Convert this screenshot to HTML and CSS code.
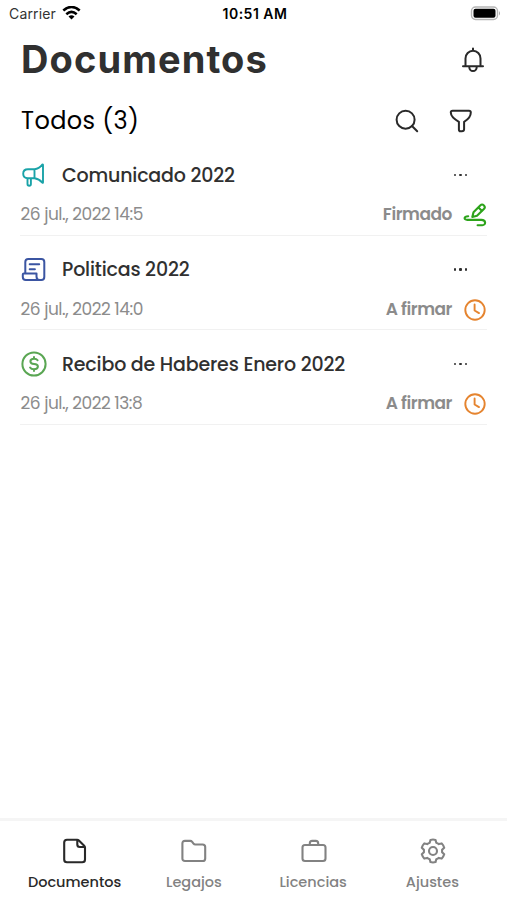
FILE: index.html
```html
<!DOCTYPE html>
<html lang="es">
<head>
<meta charset="utf-8">
<title>Documentos</title>
<link rel="stylesheet" href="styles.css">
</head>
<body>
<div class="app">
  <div class="status">
    <div class="carrier"><span>Carrier</span>
      <svg width="19" height="14" viewBox="0 0 18 14" fill="none" stroke="#000" stroke-width="2.6"><path d="M.8 4.500Q9-2.500 17.200 4.500M3.800 8.200q5.200-4.500 10.400 0"/><path d="M9 13.400l-3-3q3-2.400 6 0z" fill="#000" stroke="none"/></svg>
    </div>
    <span class="clock">10:51 AM</span>
    <svg class="battery" width="31" height="15" viewBox="0 0 31 15"><rect x="1.500" y="1" width="26" height="12.500" rx="4" fill="#fff" stroke="#b5b5b5" stroke-width="1.4"/><rect x="3.500" y="2.800" width="22" height="9" rx="2" fill="#000"/><path d="M29 5q2 2.300 0 4.600z" fill="#aaa"/></svg>
  </div>

  <header class="header">
    <h1>Documentos</h1>
    <svg width="24" height="26" viewBox="0 0 24 26" fill="none" stroke="#292929" stroke-width="2" stroke-linecap="round" stroke-linejoin="round"><path d="M12 1.500v2M2 19.200h20M4.500 19v-7.500a7.500 7.700 0 0 1 15 0V19M8.200 19.500a3.800 4.600 0 0 0 7.600 0"/></svg>
  </header>

  <section class="toolbar">
    <h2>Todos (3)</h2>
    <div class="tools">
      <svg width="24" height="24" viewBox="0 0 24 24" fill="none" stroke="#292929" stroke-width="2" stroke-linecap="round"><circle cx="10.600" cy="10.700" r="9"/><path d="M17 17l5.200 5.200"/></svg>
      <svg width="24" height="24" viewBox="0 0 24 24" fill="none" stroke="#292929" stroke-width="2" stroke-linejoin="round"><path d="M3.600 1.800h16.400q1.800 0 1.800 1.800c0 4-2 6.600-6.700 9.200v7.400c0 1.300-1.300 2-2.300 2h-1.400c-1 0-1.500-.7-1.500-1.800v-7.600C4.100 9.600 1.800 7.400 1.800 3.600q0-1.800 1.800-1.800z"/></svg>
    </div>
  </section>

  <main class="list">
    <article class="item">
      <div class="top">
        <svg class="kind" viewBox="0 0 26 26" fill="none" stroke="#1aa3a8" stroke-width="1.9" stroke-linejoin="round"><path d="M13.500 7.200H7q-4.800 0-4.800 4.500T7 16.200h6.500zM13.500 7.200q4.500-.5 7.800-4.600.7-.5.700.5v17.200q0 1-.7.300Q18 16.700 13.500 16.200M6.500 16.200v5.800q0 1.700 1.700 1.700t1.700-1.700v-5.800"/></svg>
        <span class="name">Comunicado 2022</span><span class="more"><i></i><i></i><i></i></span>
      </div>
      <div class="bottom">
        <span class="date">26 jul., 2022 14:5</span><span class="state">Firmado</span>
        <svg class="mark" viewBox="0 0 24 24" fill="none" stroke="#2ca31a" stroke-width="2.100" stroke-linecap="round" stroke-linejoin="round"><path d="M9.300 13.900l1.200-4.600 6.700-6.900q1.900-1.800 3.700 0t0 3.700l-6.900 6.700zM15.500 4.400l3.500 3.500M5.200 13.200c-4.400 0-4.800 3.600-.9 3.700h14c5 0 4.800 5.300 1 5.300h-4.700"/></svg>
      </div>
    </article>
    <article class="item">
      <div class="top">
        <svg class="kind" viewBox="0 0 26 26" fill="none" stroke="#3b55a2" stroke-width="2" stroke-linecap="round" stroke-linejoin="round"><path d="M4.300 16.500V5q0-3 3-3h13q3 0 3 3v15q0 3-3 3H4.800q-3 0-3-3v-2.500q0-1 1-1h12.700v3q0 3.500 3.200 3.500M8.700 7.200h9.500M8.700 12.200h5.200"/></svg>
        <span class="name">Politicas 2022</span><span class="more"><i></i><i></i><i></i></span>
      </div>
      <div class="bottom">
        <span class="date">26 jul., 2022 14:0</span><span class="state pending">A firmar</span>
        <svg class="mark" viewBox="0 0 24 24" fill="none" stroke="#e5842f" stroke-width="1.900" stroke-linecap="round" stroke-linejoin="round"><circle cx="12" cy="12" r="9.700"/><path d="M11.600 6.500v6l4.400 2.600"/></svg>
      </div>
    </article>
    <article class="item">
      <div class="top">
        <svg class="kind" viewBox="0 0 26 26" fill="none" stroke="#5aa653" stroke-width="2" stroke-linecap="round"><circle cx="13" cy="13" r="11.600"/><path d="M16.600 9.200q-1-1.500-3.600-1.500c-4.800 0-4.800 5.200 0 5.200 5.200 0 5.200 5.400 0 5.400q-2.900 0-3.900-1.700M13 6v1.600M13 18.400V20"/></svg>
        <span class="name">Recibo de Haberes Enero 2022</span><span class="more"><i></i><i></i><i></i></span>
      </div>
      <div class="bottom">
        <span class="date">26 jul., 2022 13:8</span><span class="state pending">A firmar</span>
        <svg class="mark" viewBox="0 0 24 24" fill="none" stroke="#e5842f" stroke-width="1.900" stroke-linecap="round" stroke-linejoin="round"><circle cx="12" cy="12" r="9.700"/><path d="M11.600 6.500v6l4.400 2.600"/></svg>
      </div>
    </article>
  </main>

  <nav class="tabs">
    <a class="tab active"><svg viewBox="0 0 26 26"><path d="M5 1.700h10.200q1 0 1.700.7l5.300 5.300q.8.800.8 1.800v12q0 2.800-2.800 2.800H5q-2.800 0-2.800-2.800v-17Q2.200 1.700 5 1.700zM15.300 2v4.500q0 2.500 2.500 2.500h5"/></svg><span>Documentos</span></a>
    <a class="tab"><svg viewBox="0 0 26 26"><path d="M4 2.900h5.200q1.200 0 2 1l1.300 1.700q.7.900 1.800.9h7.300q2.600 0 2.600 2.600v11.300q0 2.600-2.600 2.600H4q-2.600 0-2.600-2.600V5.500Q1.400 2.900 4 2.900z"/></svg><span>Legajos</span></a>
    <a class="tab"><svg viewBox="0 0 26 26"><rect x="1.500" y="7" width="23" height="16" rx="2.500"/><path d="M8.800 7V5.400q0-2.500 2.500-2.500h3.400q2.500 0 2.500 2.500V7"/></svg><span>Licencias</span></a>
    <a class="tab"><svg viewBox="0 0 26 26"><circle cx="13" cy="13" r="4"/><path d="M10.500 1.900q2.500-.8 5 0l.8 2.900q1.400.5 2.500 1.300l2.900-.7q1.800 1.900 2.500 4.300l-2.100 2.100v2.400l2.100 2.100q-.7 2.400-2.500 4.300l-2.900-.7q-1.100.8-2.500 1.300l-.8 2.900q-2.500.8-5 0l-.8-2.900q-1.400-.5-2.500-1.300l-2.900.7q-1.800-1.900-2.500-4.300l2.100-2.100v-2.400L1.800 9.700q.7-2.400 2.500-4.300l2.900.7q1.100-.8 2.500-1.300z"/></svg><span>Ajustes</span></a>
  </nav>
</div>
</body>
</html>
```
FILE: styles.css
```css
* { box-sizing: border-box; }
body { margin: 0; background: #fff; color: #303030; font-family: Poppins, Inter, sans-serif; }
h1, h2 { margin: 0; }
svg { display: block; flex: none; }
span { white-space: nowrap; }
.app { height: 900px; display: flex; flex-direction: column; }
.status { height: 27px; padding: 0 6px 0 9px; display: grid; grid-template-columns: 1fr auto 1fr; align-items: center; font: 14px Inter, sans-serif; color: #000; }
.carrier { display: flex; align-items: center; gap: 6px; color: #333; letter-spacing: .15px; }
.carrier svg { margin-top: -2px; }
.clock { font-weight: 600; letter-spacing: .5px; }
.battery { justify-self: end; }
.header { height: 66px; padding: 0 22px 0 21px; display: flex; align-items: center; justify-content: space-between; }
h1 { font: 700 38px/64px Inter, sans-serif; letter-spacing: 1.1px; color: #303030; height: 66px; }
.toolbar { height: 48px; padding: 8px 34px 0 21px; display: flex; align-items: center; justify-content: space-between; }
h2 { font-size: 24px; line-height: 40px; font-weight: 400; letter-spacing: .4px; color: #000; }
.tools { display: flex; gap: 30px; margin-top: -1px; }
.list { flex: 1; padding: 0 20px; }
.item { height: 94.5px; padding-top: 16px; border-bottom: 1px solid #f1f1f1; }
.top { height: 36px; padding-right: 20px; display: flex; align-items: center; }
.kind { width: 26px; height: 26px; margin: 0 15px 0 1px; }
.name { font-size: 19px; font-weight: 500; letter-spacing: -.18px; }
.more { margin-left: auto; display: flex; gap: 3px; }
.more i { width: 2.500px; height: 2.500px; background: #303030; border-radius: 1px; }
.bottom { height: 42px; display: flex; align-items: center; }
.date { font-size: 17px; color: #8c8c8c; letter-spacing: -.47px; margin-left: .5px; }
.state { margin-left: auto; font-size: 17px; font-weight: 600; color: #8b8b8b; letter-spacing: -.45px; }
.mark { width: 24px; height: 24px; margin: 2px 0 0 11px; }
.tabs { height: 82px; padding: 17px 15px 0; border-top: 3px solid #f5f5f5; display: grid; grid-template-columns: repeat(4, 1fr); }
.tab { display: flex; flex-direction: column; align-items: center; gap: 8px; color: #828282; font-size: 14.500px; line-height: 20px; font-weight: 500; }
.tab svg { width: 26px; height: 26px; margin-left: 1px; fill: none; stroke: currentColor; stroke-width: 2.100; stroke-linejoin: round; }
.tab.active { color: #292929; }
```
